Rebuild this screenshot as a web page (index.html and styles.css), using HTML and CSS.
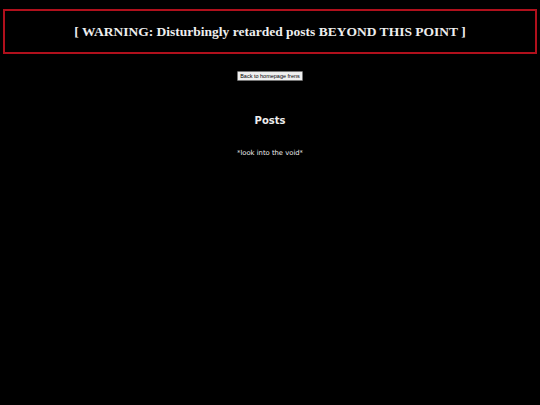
FILE: index.html
```html
<!DOCTYPE html>
<html>
<head>
<meta charset="utf-8">
<link rel="stylesheet" href="styles.css">
</head>
<body>
<div class="warning">[ WARNING: Disturbingly retarded posts BEYOND THIS POINT ]</div>
<div class="nav"><button class="back">Back to homepage frens</button></div>
<h2 class="title">Posts</h2>
<p class="void">*look into the void*</p>
</body>
</html>
```
FILE: styles.css
```css
html, body {
  margin: 0;
  padding: 0;
  background: #000;
  height: 100%;
}
body {
  color: #eee;
  font-family: "DejaVu Sans", sans-serif;
}
.warning {
  margin: 9px 3px 0;
  height: 41px;
  border: 2px solid #b0101c;
  display: flex;
  align-items: center;
  justify-content: center;
  font-family: "Liberation Serif", serif;
  font-weight: bold;
  font-size: 13.5px;
  color: #eee;
}
.nav {
  display: flex;
  justify-content: center;
  margin-top: 17px;
}
.back {
  font-family: "Liberation Sans", sans-serif;
  font-size: 5.5px;
  line-height: 6px;
  padding: 1px 2px;
  background: #efefef;
  color: #000;
  border: 1px solid #767676;
  border-radius: 1px;
}
.title {
  margin: 33px 0 0;
  text-align: center;
  font-size: 10px;
  line-height: 13px;
  font-weight: bold;
}
.void {
  margin: 22px 0 0;
  text-align: center;
  font-size: 6.8px;
  line-height: 8px;
  -webkit-font-smoothing: antialiased;
}
```
